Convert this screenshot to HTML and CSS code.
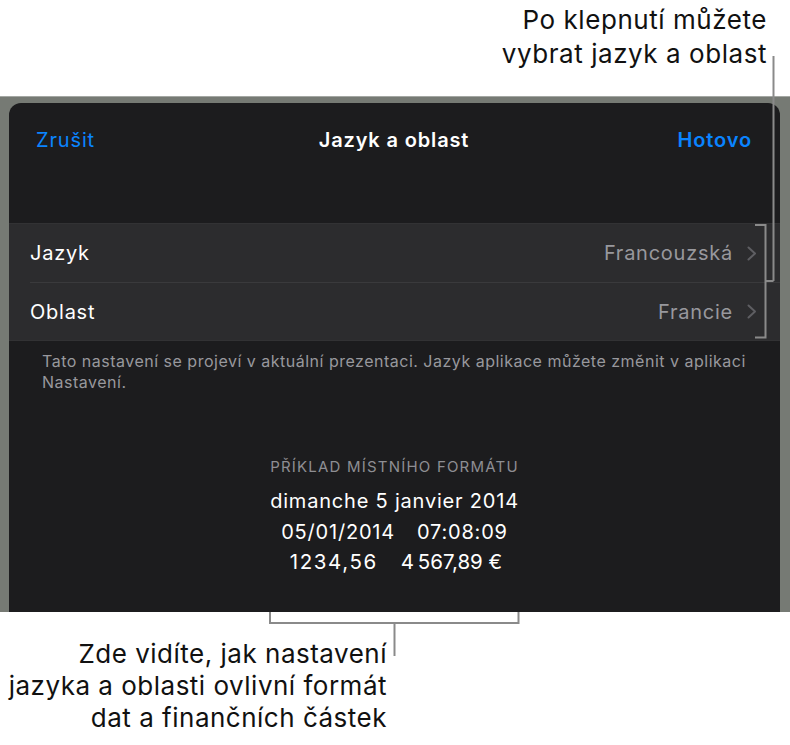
FILE: index.html
```html
<!DOCTYPE html>
<html lang="cs">
<head>
<meta charset="utf-8">
<link rel="stylesheet" href="styles.css">
</head>
<body>
<div class="page">
  <div class="callout-top">Po klepnutí můžete<br>vybrat jazyk a oblast</div>
  <div class="frame">
    <div class="panel">
      <div class="nav">
        <span class="nav-btn cancel">Zrušit</span>
        <span class="nav-title">Jazyk a oblast</span>
        <span class="nav-btn done">Hotovo</span>
      </div>
      <div class="group">
        <div class="row">
          <span class="label">Jazyk</span>
          <span class="value">Francouzská</span>
          <svg class="chev" width="10" height="15" viewBox="0 0 10 15"><path d="M1.5 1.5 L8 7.5 L1.5 13.5" fill="none" stroke="#5e5e62" stroke-width="2" stroke-linecap="round" stroke-linejoin="round"/></svg>
        </div>
        <div class="row">
          <span class="label">Oblast</span>
          <span class="value">Francie</span>
          <svg class="chev" width="10" height="15" viewBox="0 0 10 15"><path d="M1.5 1.5 L8 7.5 L1.5 13.5" fill="none" stroke="#5e5e62" stroke-width="2" stroke-linecap="round" stroke-linejoin="round"/></svg>
        </div>
      </div>
      <p class="note">Tato nastavení se projeví v aktuální prezentaci. Jazyk aplikace můžete změnit v aplikaci Nastavení.</p>
      <div class="example">
        <div class="ex-head">PŘÍKLAD MÍSTNÍHO FORMÁTU</div>
        <div class="ex-line">dimanche 5 janvier 2014</div>
        <div class="ex-line">05/01/2014<span class="sp"></span>07:08:09</div>
        <div class="ex-money"><span class="num">1234,56</span><span class="num cur">4&#8239;567,89&nbsp;€</span></div>
      </div>
    </div>
  </div>
  <div class="callout-bottom">Zde vidíte, jak nastavení<br>jazyka a oblasti ovlivní formát<br>dat a finančních částek</div>
  <svg class="lines" width="790" height="745" viewBox="0 0 790 745">
    <g fill="none" stroke="#8a8a8a" stroke-width="2">
      <path d="M773.5 56 V281"/>
      <path d="M755 225 H765.5 V337.5 H755"/>
      <path d="M765.5 281 H773.5"/>
      <path d="M270 612 V623 H518.5 V612"/>
      <path d="M394.5 623 V656"/>
    </g>
  </svg>
</div>
</body>
</html>
```

FILE: styles.css
```css
* { box-sizing: border-box; }
html, body {
  margin: 0;
  padding: 0;
  background: #ffffff;
}
body {
  font-family: Inter, "Noto Sans", "Liberation Sans", sans-serif;
  color: #000;
}
.page {
  position: relative;
  width: 790px;
  height: 745px;
  overflow: hidden;
}
.callout-top {
  height: 96px;
  padding-top: 3px;
  padding-right: 23px;
  text-align: right;
  font-size: 26px;
  letter-spacing: 0.55px;
  line-height: 34px;
  color: #111;
}
.frame {
  height: 516px;
  background: #767a74;
  border-top: 1px solid #a4a7a3;
  padding: 6px 10px 0 9px;
}
.panel {
  height: 509px;
  background: #1c1c1e;
  border-radius: 12px 12px 0 0;
  overflow: hidden;
}
.nav {
  display: grid;
  grid-template-columns: 1fr auto 1fr;
  align-items: start;
  padding: 21px 28px 0 27px;
  height: 120px;
  font-size: 20px;
  letter-spacing: 0.85px;
  line-height: 32px;
}
.nav-btn {
  color: #0a84ff;
}
.cancel {
  justify-self: start;
}
.nav-btn.done {
  font-weight: 600;
  justify-self: end;
}
.nav-title {
  color: #fff;
  font-weight: 600;
}
.group {
  background: #2c2c2e;
  border-top: 1px solid #323234;
  border-bottom: 1px solid #323234;
}
.row {
  display: flex;
  align-items: center;
  height: 58px;
  margin-left: 21px;
  padding-right: 23px;
  font-size: 20px;
  letter-spacing: 0.75px;
}
.row + .row {
  border-top: 1px solid #3a3a3c;
}
.label {
  flex: 1;
  color: #fff;
}
.value {
  color: #98989d;
}
.chev {
  margin-left: 14px;
  display: block;
}
.note {
  margin: 0;
  padding: 10px 30px 0 33px;
  font-size: 16px;
  letter-spacing: 0.5px;
  line-height: 21px;
  color: #98989d;
}
.example {
  text-align: center;
  padding-top: 64px;
  color: #fff;
}
.ex-head {
  font-size: 15px;
  letter-spacing: 1.2px;
  line-height: 20px;
  color: #8e8e93;
  margin-bottom: 9px;
}
.ex-line {
  font-size: 20px;
  letter-spacing: 0.8px;
  line-height: 30.5px;
}
.ex-money {
  display: flex;
  justify-content: center;
  gap: 23px;
  font-size: 20.5px;
  letter-spacing: 1.6px;
  line-height: 30.5px;
  padding-left: 3px;
}
.sp {
  display: inline-block;
  width: 22px;
}
.callout-bottom {
  width: 387px;
  padding-top: 26px;
  text-align: right;
  font-size: 26px;
  letter-spacing: 0.5px;
  line-height: 32px;
  color: #111;
}
.lines {
  position: absolute;
  left: 0;
  top: 0;
  pointer-events: none;
}
```
